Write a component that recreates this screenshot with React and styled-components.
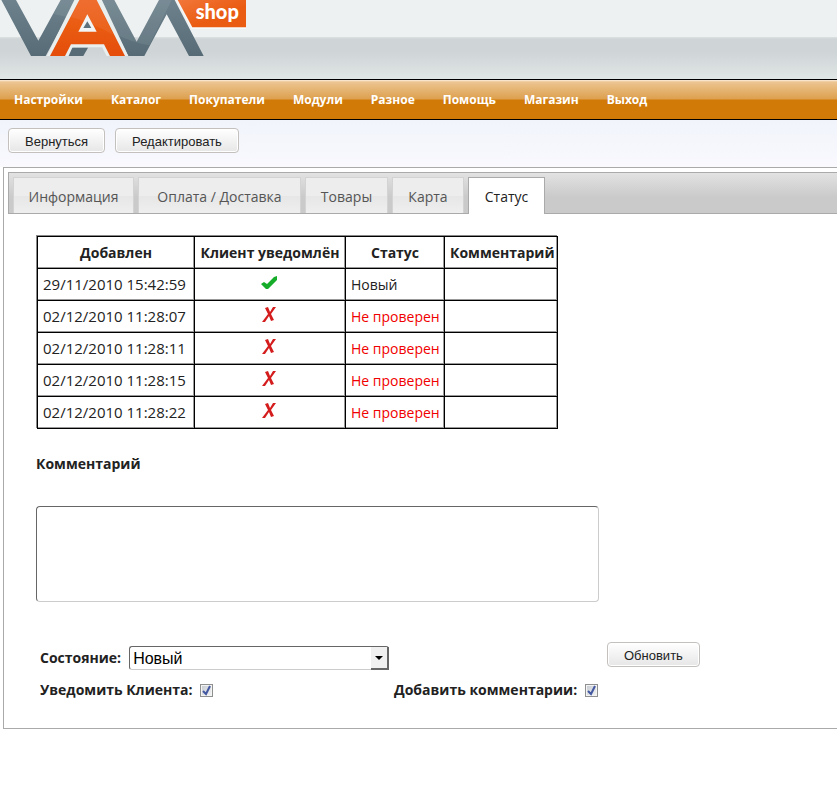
import React from 'react'
import styled, { createGlobalStyle } from 'styled-components'

const GlobalStyle = createGlobalStyle`
    * { box-sizing: border-box; }
    body {
        margin: 0;
        background: #fff;
        color: #222;
        font-family: 'Open Sans', 'Noto Sans', sans-serif;
        font-size: 14px;
        line-height: 20px;
    }
`

const Header = styled.header`
    height: 79px;
    background: linear-gradient(#edf1f1 0, #edf1f1 37px, #dde1e2 37px, #cfd4d7 39px, #cfd4d7 52px, #e0e6e5 79px);
`

const Logo = styled.svg`
    display: block;
    width: 260px;
    height: 56px;
`

const Menu = styled.nav`
    display: flex;
    height: 41px;
    border-top: 1px solid #000;
    border-bottom: 1px solid #000;
    background: linear-gradient(#fbeedd 0, #ecc591 2px, #dda04e 19px, #d17a08 20px, #d17a08 100%);
`

const MenuLink = styled.a`
    padding: 10px 14px;
    color: #fff;
    font-size: 12px;
    font-weight: 700;
    text-decoration: none;
`

const Actions = styled.div`
    display: flex;
    gap: 10px;
    height: 47px;
    padding: 8px;
    background: linear-gradient(#f1f4fb, #f9f9fe);
`

const Button = styled.button`
    height: 25px;
    padding: 2px 16px 0;
    border: 1px solid #c4c0bd;
    border-radius: 4px;
    background: linear-gradient(#fff, #e6e6e6);
    box-shadow: inset 0 0 0 1px #fff;
    color: #222;
    font: 13px/22px 'Liberation Sans', Arial, sans-serif;
`

const Panel = styled.main`
    margin-left: 3px;
    padding: 4px 0 22px 4px;
    border: 1px solid #aaa;
    border-right: 0;
    background: #fff;
`

const Tabs = styled.div`
    display: flex;
    align-items: flex-end;
    gap: 4px;
    height: 42px;
    padding-left: 4px;
    border: 1px solid #aaa;
    border-right: 0;
    background: linear-gradient(#e2e2e2, #cacaca 60%);
`

const Tab = styled.button`
    height: 36px;
    min-width: ${p => p.$width}px;
    padding: 2px 14px 0;
    border: 1px solid ${p => p.$active ? '#aaa' : '#d3d3d3'};
    border-bottom: 0;
    background: ${p => p.$active ? '#fff' : 'linear-gradient(#ededed 50%, #e6e6e6 50%, #efefef)'};
    color: ${p => p.$active ? '#222' : '#555'};
    font: inherit;
    ${p => p.$active && 'height: 37px; margin-bottom: -1px;'}
`

const Content = styled.section`
    padding: 22px 28px 0;
`

const HistoryTable = styled.table`
    margin-left: 1px;
    border-spacing: 0;
    border-top: 1px solid #000;
    border-left: 1px solid #000;
    box-shadow: -1px -1px 0 #888;
    table-layout: fixed;
    width: 521px;

    th, td {
        height: 32px;
        padding: 0 5px;
        border-right: 1px solid #000;
        border-bottom: 1px solid #000;
        box-shadow: inset -1px -1px 0 #999;
        text-align: left;
        white-space: nowrap;
    }
    th { text-align: center; font-weight: 700; }
`

const DateCell = styled.td`
    && { padding-bottom: 2px; }
    font-size: 15px;
`

const IconCell = styled.td`
    && { text-align: center; }
    svg { display: block; margin: 0 auto 4px; }
`

const StatusCell = styled.td`
    color: ${p => p.$unchecked ? '#f00000' : '#222'};
`

const CommentLabel = styled.label`
    display: block;
    margin: 25px 0 32px;
    font-weight: 700;
`

const CommentBox = styled.textarea`
    display: block;
    width: 563px;
    height: 96px;
    border: 1px solid;
    border-color: #666 #ccc #ccc #666;
    border-radius: 4px;
    resize: none;
`

const StatusForm = styled.form`
    display: grid;
    grid-template-columns: 354px 213px auto;
    grid-auto-rows: 32px;
    align-items: center;
    justify-content: start;
    margin: 40px 0 0 4px;

    ${Button} { align-self: start; }
`

const Field = styled.div`
    display: flex;
    align-items: center;
    gap: 8px;
    grid-column: ${p => p.$wide ? 'span 2' : 'auto'};

    label { font-weight: 700; white-space: nowrap; }
`

const SelectWrap = styled.div`
    position: relative;

    select {
        appearance: none;
        display: block;
        width: 260px;
        height: 24px;
        padding: 0 20px 0 3px;
        border: 1px solid;
        border-color: #666 #ccc #ccc #666;
        border-radius: 3px;
        background: #fff;
        color: #000;
        font: 16px 'Liberation Sans', Arial, sans-serif;
    }
    svg { position: absolute; top: 1px; right: 0; pointer-events: none; }
`

const CheckWrap = styled.span`
    position: relative;
    height: 13px;

    input {
        appearance: none;
        display: block;
        width: 13px;
        height: 13px;
        margin: 0;
        border: 1px solid #8e8f8f;
        background: linear-gradient(135deg, #c3c9d0, #f6f6f6);
        box-shadow: inset 0 0 0 1px #f4f4f4;
    }
    svg { position: absolute; top: 0; left: 0; pointer-events: none; display: none; }
    input:checked + svg { display: block; }
`

const menu = ['Настройки', 'Каталог', 'Покупатели', 'Модули', 'Разное', 'Помощь', 'Магазин', 'Выход']

const tabs = [
    { title: 'Информация', width: 121 },
    { title: 'Оплата / Доставка', width: 163 },
    { title: 'Товары', width: 83 },
    { title: 'Карта', width: 72 },
    { title: 'Статус', width: 77 },
]

const history = [
    { date: '29/11/2010 15:42:59', notified: true, status: 'Новый' },
    { date: '02/12/2010 11:28:07', notified: false, status: 'Не проверен' },
    { date: '02/12/2010 11:28:11', notified: false, status: 'Не проверен' },
    { date: '02/12/2010 11:28:15', notified: false, status: 'Не проверен' },
    { date: '02/12/2010 11:28:22', notified: false, status: 'Не проверен' },
]

function VamLogo() {
    return (
        <Logo viewBox="0 0 780 168" role="img" aria-label="VaM shop">
            <defs>
                <linearGradient id="steel" x1="0" y1="0" x2="0" y2="168" gradientUnits="userSpaceOnUse">
                    <stop offset="0" stopColor="#6d828d" />
                    <stop offset="1" stopColor="#566b76" />
                </linearGradient>
                <linearGradient id="orange" x1="0" y1="0" x2="0" y2="168" gradientUnits="userSpaceOnUse">
                    <stop offset="0" stopColor="#ee6424" />
                    <stop offset="0.45" stopColor="#ea5c12" />
                    <stop offset="1" stopColor="#e44d0a" />
                </linearGradient>
                <linearGradient id="box" x1="0" y1="0" x2="1" y2="1">
                    <stop offset="0" stopColor="#f2773a" />
                    <stop offset="0.6" stopColor="#ea5c12" />
                </linearGradient>
            </defs>
            <g fill="url(#steel)">
                <path d="M4 0H48L115 122L182 0H228L137 168H93Z" />
                <path d="M297 0H343L410 125L477 0H524L611 168H567L500 43L433 168H385Z" />
                <path d="M160 42Q185 48 205 52L228 0H182Z" fill="#fff" opacity="0.08" />
                <path d="M297 0H343L410 125L477 0H515L448 136Q400 128 350 104Z" fill="#fff" opacity="0.08" />
            </g>
            <path d="M238 -10H291L375 168H330L312 133H213L195 168H150Z" fill="none" stroke="#e9eeee" strokeWidth="18" />
            <path d="M217 143H264L250 168H206Z" fill="#566b76" />
            <path d="M238 0H290L375 168H330L312 133H213L195 168H150Z" fill="url(#orange)" />
            <path d="M238 0H290L340 104Q260 62 213 52Z" fill="#fff" opacity="0.06" />
            <path d="M262 43L290 95H235Z" fill="#f2f5f5" />
            <path d="M262 64L274 84H250Z" fill="#5d727d" />
            <path d="M533 0L577 83H738" fill="none" stroke="#f7f9f9" strokeWidth="8" />
            <path d="M533 0H738V82H577Z" fill="url(#box)" />
            <text x="587" y="57" fill="#fff" fontFamily="Lato, sans-serif" fontWeight="900" fontSize="60">shop</text>
        </Logo>
    )
}

function NotifiedIcon({ ok }) {
    return ok ? (
        <svg width="18" height="16" viewBox="0 0 18 16" aria-label="Да">
            <path d="M0 9L3 7L6 9L13 2L16 1V5L7 14H5Z" fill="#14ac28" />
        </svg>
    ) : (
        <svg width="16" height="18" viewBox="0 0 16 18" aria-label="Нет">
            <path d="M3 2L6 1L8 6L11 1L14 1L9 8L12 14L9 15L7 10L3 16L0 16L6 8Z" fill="#d41c1c" />
        </svg>
    )
}

function Checkbox({ id }) {
    return (
        <CheckWrap>
            <input type="checkbox" id={id} defaultChecked />
            <svg width="13" height="13" viewBox="0 0 13 13">
                <path d="M3 7L6 10L10 2" fill="none" stroke="#4358a0" strokeWidth="2" />
            </svg>
        </CheckWrap>
    )
}

export default function App() {
    return (
        <>
            <GlobalStyle />
            <Header><VamLogo /></Header>
            <Menu>
                {menu.map(item => <MenuLink href="#" key={item}>{item}</MenuLink>)}
            </Menu>
            <Actions>
                <Button type="button">Вернуться</Button>
                <Button type="button">Редактировать</Button>
            </Actions>
            <Panel>
                <Tabs role="tablist">
                    {tabs.map(tab => (
                        <Tab
                            type="button"
                            role="tab"
                            key={tab.title}
                            $width={tab.width}
                            $active={tab.title === 'Статус'}
                            aria-selected={tab.title === 'Статус'}
                        >
                            {tab.title}
                        </Tab>
                    ))}
                </Tabs>
                <Content>
                    <HistoryTable>
                        <colgroup>
                            <col width="157" />
                            <col width="151" />
                            <col width="99" />
                            <col width="113" />
                        </colgroup>
                        <thead>
                            <tr>
                                <th>Добавлен</th>
                                <th>Клиент уведомлён</th>
                                <th>Статус</th>
                                <th>Комментарий</th>
                            </tr>
                        </thead>
                        <tbody>
                            {history.map(row => (
                                <tr key={row.date}>
                                    <DateCell>{row.date}</DateCell>
                                    <IconCell><NotifiedIcon ok={row.notified} /></IconCell>
                                    <StatusCell $unchecked={row.status === 'Не проверен'}>{row.status}</StatusCell>
                                    <td></td>
                                </tr>
                            ))}
                        </tbody>
                    </HistoryTable>
                    <CommentLabel htmlFor="comments">Комментарий</CommentLabel>
                    <CommentBox id="comments" />
                    <StatusForm>
                        <Field>
                            <label htmlFor="status">Состояние:</label>
                            <SelectWrap>
                                <select id="status" defaultValue="Новый">
                                    <option>Новый</option>
                                    <option>Не проверен</option>
                                </select>
                                <svg width="18" height="23" viewBox="0 0 18 23">
                                    <path d="M0 0H18V23H0Z" fill="#666" />
                                    <path d="M0 0H16V21H0Z" fill="#f0f0f0" />
                                    <path d="M4 9H12L8 13Z" fill="#000" />
                                </svg>
                            </SelectWrap>
                        </Field>
                        <span />
                        <Button type="button">Обновить</Button>
                        <Field>
                            <label htmlFor="notify">Уведомить Клиента:</label>
                            <Checkbox id="notify" />
                        </Field>
                        <Field $wide>
                            <label htmlFor="notify_comments">Добавить комментарии:</label>
                            <Checkbox id="notify_comments" />
                        </Field>
                    </StatusForm>
                </Content>
            </Panel>
        </>
    )
}
